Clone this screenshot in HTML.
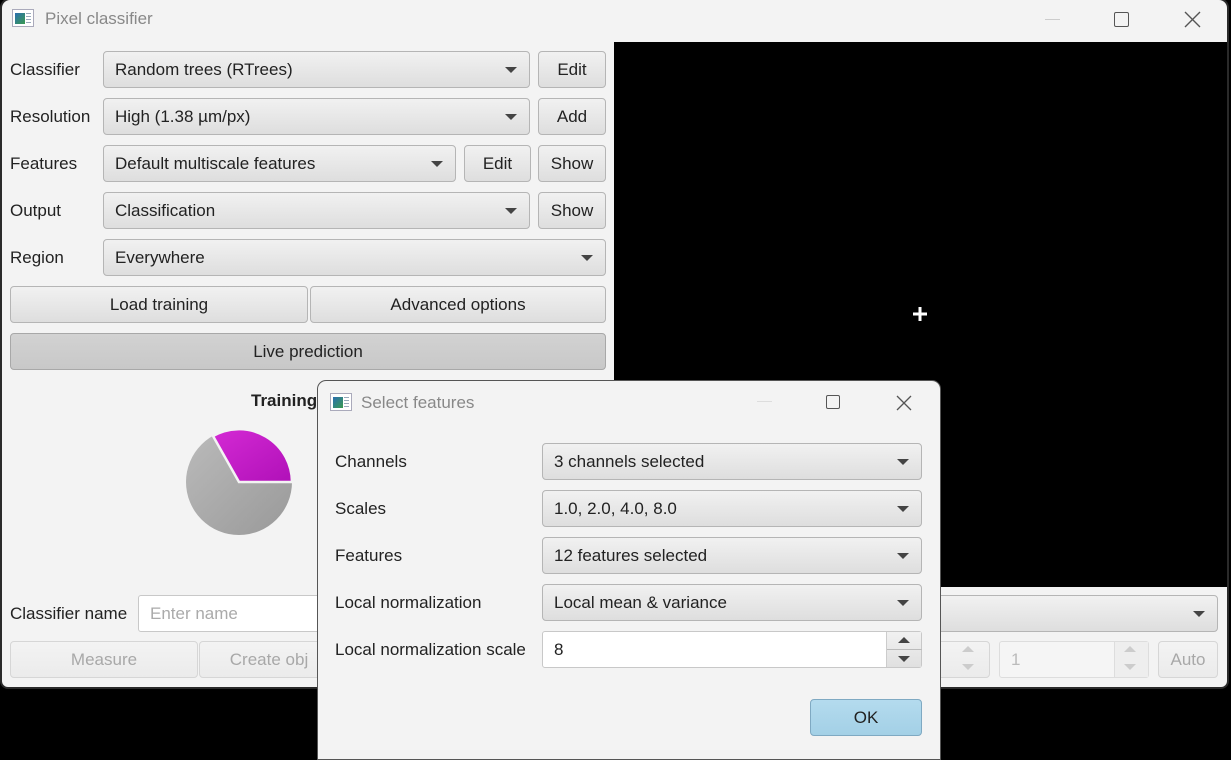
<!DOCTYPE html>
<html><head><meta charset="utf-8"><style>
*{box-sizing:border-box;margin:0;padding:0}
html,body{width:1231px;height:751px}
body{background:#000;position:relative;overflow:hidden;font-family:"Liberation Sans",sans-serif;font-size:17px;color:#222}
.a{position:absolute}
.win{left:2px;top:0;width:1225px;height:687px;background:#f3f3f3;border-radius:8px 8px 6px 6px;box-shadow:0 0 0 2px #2a2a2a}
.lbl{position:absolute;line-height:20px}
.cb{position:absolute;height:37px;border:1px solid #b5b5b5;border-radius:4px;background:linear-gradient(#f1f1f1,#dedede);line-height:35px;padding-left:11px;white-space:nowrap}
.cb .ar{position:absolute;right:12px;top:15px;width:0;height:0;border-left:6px solid transparent;border-right:6px solid transparent;border-top:6px solid #444}
.bt{position:absolute;height:37px;border:1px solid #b5b5b5;border-radius:4px;background:linear-gradient(#f1f1f1,#dedede);line-height:35px;text-align:center}
.dis{color:#a8a8a8;border-color:#d6d6d6;background:linear-gradient(#f3f3f3,#ebebeb)}
.tf{position:absolute;height:37px;border:1px solid #c8c8c8;border-radius:3px;background:#fff;line-height:35px;padding-left:11px}
.icon{position:absolute;width:22px;height:18px;border:1px solid #aab;background:#fff}
.icon i{position:absolute;left:2px;top:3px;width:10px;height:11px;background:linear-gradient(135deg,#2a6fb0,#3a9a50)}
.icon b{position:absolute;right:2px;top:3px;width:5px;height:11px;background:repeating-linear-gradient(#9ab 0 1px,#fff 1px 3px)}
.up{position:absolute;border-left:6px solid transparent;border-right:6px solid transparent;border-bottom:6px solid #ccc}
.dn{position:absolute;border-left:6px solid transparent;border-right:6px solid transparent;border-top:6px solid #ccc}
</style></head><body>
<div class="a win"></div>
<div class="icon" style="left:12px;top:9px"><i></i><b></b></div>
<div class="lbl" style="left:45px;top:9px;color:#888">Pixel classifier</div>
<div class="a" style="left:1045px;top:19px;width:15px;height:1px;background:#ccc"></div>
<div class="a" style="left:1114px;top:12px;width:15px;height:15px;border:1.5px solid #555;border-radius:2px"></div>
<svg class="a" style="left:1184px;top:11px" width="17" height="17"><path d="M1 1L16 16M16 1L1 16" stroke="#555" stroke-width="1.4"/></svg>
<div class="a" style="left:614px;top:42px;width:613px;height:545px;background:#000"></div>
<svg class="a" style="left:912px;top:306px" width="16" height="16"><path d="M8 1V15M1 8H15" stroke="#fff" stroke-width="3"/></svg>

<div class="lbl" style="left:10px;top:60px">Classifier</div>
<div class="cb" style="left:103px;top:51px;width:427px">Random trees (RTrees)<span class="ar"></span></div>
<div class="bt" style="left:538px;top:51px;width:68px">Edit</div>
<div class="lbl" style="left:10px;top:107px">Resolution</div>
<div class="cb" style="left:103px;top:98px;width:427px">High (1.38 µm/px)<span class="ar"></span></div>
<div class="bt" style="left:538px;top:98px;width:68px">Add</div>
<div class="lbl" style="left:10px;top:154px">Features</div>
<div class="cb" style="left:103px;top:145px;width:353px">Default multiscale features<span class="ar"></span></div>
<div class="bt" style="left:464px;top:145px;width:67px">Edit</div>
<div class="bt" style="left:538px;top:145px;width:68px">Show</div>
<div class="lbl" style="left:10px;top:201px">Output</div>
<div class="cb" style="left:103px;top:192px;width:427px">Classification<span class="ar"></span></div>
<div class="bt" style="left:538px;top:192px;width:68px">Show</div>
<div class="lbl" style="left:10px;top:248px">Region</div>
<div class="cb" style="left:103px;top:239px;width:503px">Everywhere<span class="ar"></span></div>
<div class="bt" style="left:10px;top:286px;width:298px">Load training</div>
<div class="bt" style="left:310px;top:286px;width:296px">Advanced options</div>
<div class="bt" style="left:10px;top:333px;width:596px;background:linear-gradient(#d2d2d2,#c8c8c8);border-color:#a8a8a8">Live prediction</div>
<div class="lbl" style="left:251px;top:391px;font-weight:bold">Training</div>
<svg class="a" style="left:180px;top:424px" width="120" height="120">
<defs><linearGradient id="g" x1="0" y1="0" x2="1" y2="1"><stop offset="0" stop-color="#bbb"/><stop offset="1" stop-color="#999"/></linearGradient>
<linearGradient id="m" x1="0" y1="0" x2="1" y2="1"><stop offset="0" stop-color="#d42ad4"/><stop offset="1" stop-color="#b010b8"/></linearGradient></defs>
<circle cx="59" cy="58" r="53" fill="url(#g)"/>
<path d="M59 58L33 12A53 53 0 0 1 112 58Z" fill="url(#m)" stroke="#f3f3f3" stroke-width="2.5"/>
</svg>
<div class="lbl" style="left:10px;top:604px">Classifier name</div>
<div class="tf" style="left:138px;top:595px;width:200px;color:#aaa">Enter name</div>
<div class="bt dis" style="left:10px;top:641px;width:188px">Measure</div>
<div class="bt dis" style="left:199px;top:641px;width:140px">Create obj</div>
<div class="cb" style="left:900px;top:595px;width:318px"><span class="ar"></span></div>
<div class="bt dis" style="left:900px;top:641px;width:90px"></div>
<div class="up" style="left:962px;top:646px"></div><div class="dn" style="left:962px;top:664px"></div>
<div class="tf" style="left:999px;top:641px;width:150px;color:#bbb;border-color:#ddd;background:#f5f5f5">1</div>
<div class="a" style="left:1114px;top:642px;width:34px;height:35px;border-left:1px solid #ddd;background:#eee"></div>
<div class="up" style="left:1124px;top:646px"></div><div class="dn" style="left:1124px;top:664px"></div>
<div class="bt dis" style="left:1158px;top:641px;width:60px">Auto</div>

<div class="a" style="left:317px;top:380px;width:624px;height:380px;background:#f3f3f3;border:1px solid #555;border-radius:9px 9px 0 0"></div>
<div class="icon" style="left:330px;top:393px"><i></i><b></b></div>
<div class="lbl" style="left:361px;top:393px;color:#888">Select features</div>
<div class="a" style="left:757px;top:401px;width:15px;height:1px;background:#ddd"></div>
<div class="a" style="left:826px;top:395px;width:14px;height:14px;border:1.5px solid #555;border-radius:2px"></div>
<svg class="a" style="left:896px;top:395px" width="16" height="16"><path d="M1 1L15 15M15 1L1 15" stroke="#555" stroke-width="1.3"/></svg>
<div class="lbl" style="left:335px;top:452px">Channels</div>
<div class="cb" style="left:542px;top:443px;width:380px">3 channels selected<span class="ar"></span></div>
<div class="lbl" style="left:335px;top:499px">Scales</div>
<div class="cb" style="left:542px;top:490px;width:380px">1.0, 2.0, 4.0, 8.0<span class="ar"></span></div>
<div class="lbl" style="left:335px;top:546px">Features</div>
<div class="cb" style="left:542px;top:537px;width:380px">12 features selected<span class="ar"></span></div>
<div class="lbl" style="left:335px;top:593px">Local normalization</div>
<div class="cb" style="left:542px;top:584px;width:380px">Local mean &amp; variance<span class="ar"></span></div>
<div class="lbl" style="left:335px;top:640px">Local normalization scale</div>
<div class="tf" style="left:542px;top:631px;width:380px">8</div>
<div class="a" style="left:886px;top:632px;width:35px;height:35px;border-left:1px solid #ccc;background:linear-gradient(#f1f1f1,#e0e0e0)">
<div class="a" style="left:0;top:17px;width:35px;height:1px;background:#bbb"></div>
<div class="a" style="left:11px;top:5px;border-left:6px solid transparent;border-right:6px solid transparent;border-bottom:6px solid #444"></div>
<div class="a" style="left:11px;top:24px;border-left:6px solid transparent;border-right:6px solid transparent;border-top:6px solid #444"></div>
</div>
<div class="bt" style="left:810px;top:699px;width:112px;background:linear-gradient(#b4dbee,#a3d0e6);border-color:#7fa9c2">OK</div>
</body></html>
